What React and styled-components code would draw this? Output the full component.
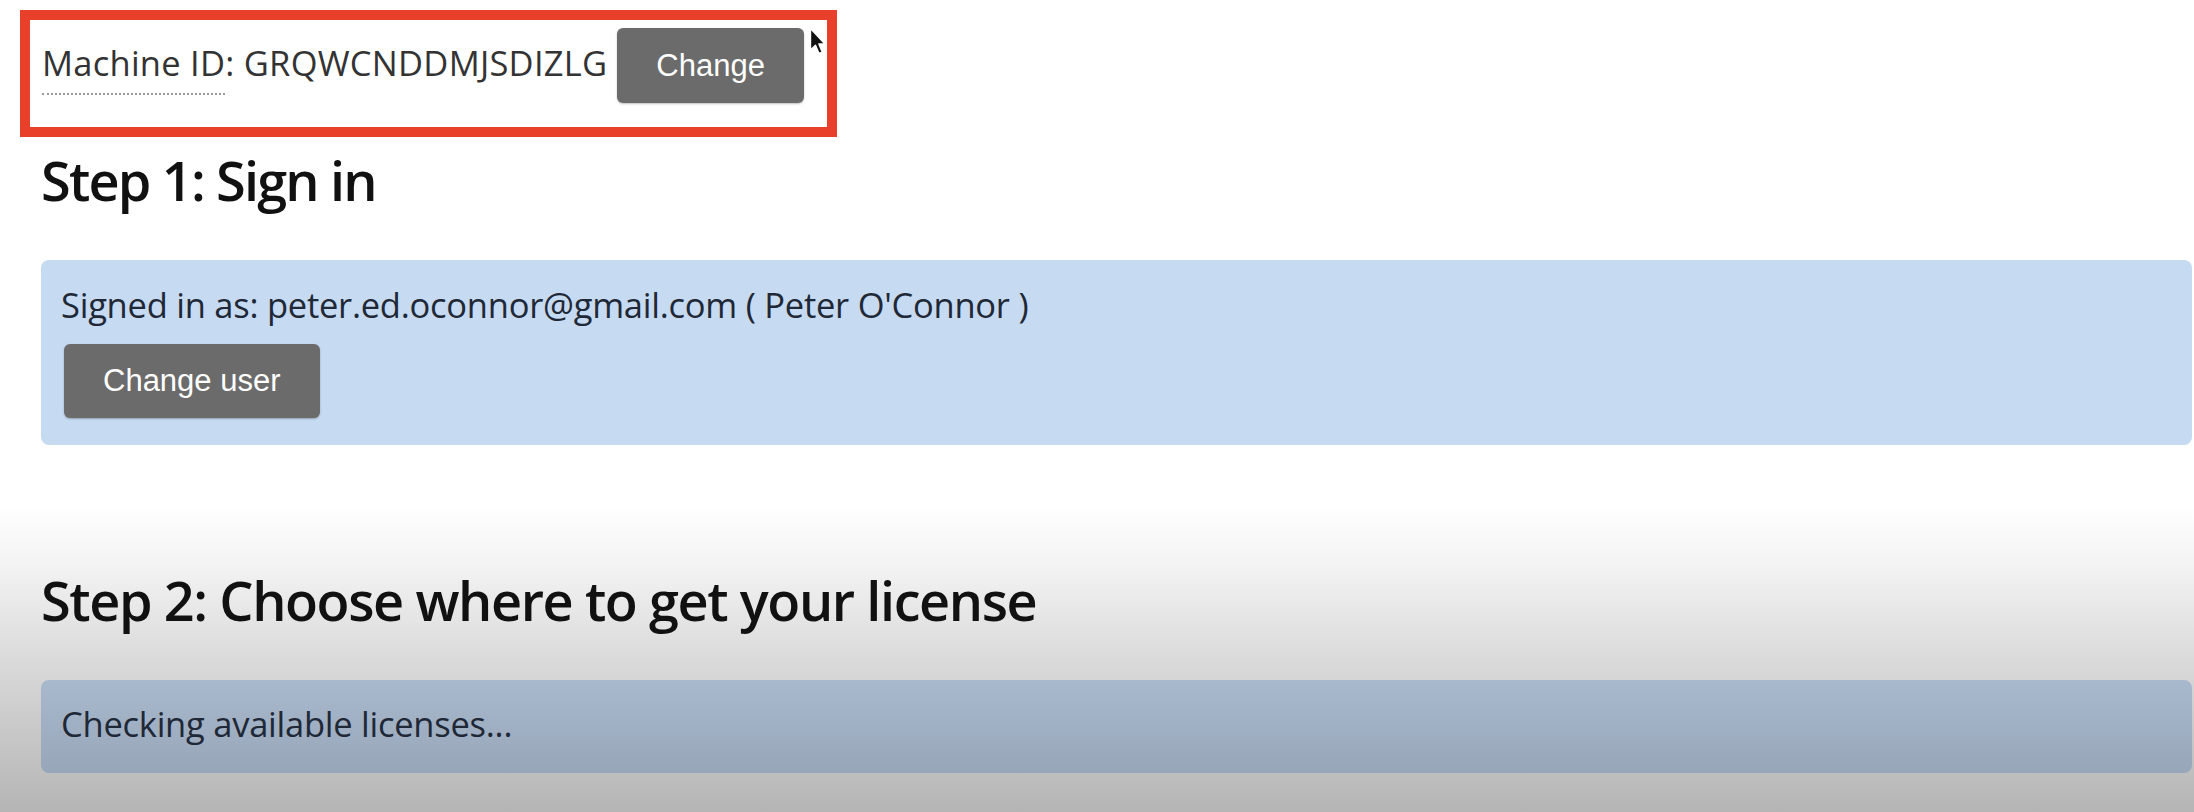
import React from "react";
import styled, { createGlobalStyle } from "styled-components";

const GlobalStyle = createGlobalStyle`
  html, body {
    margin: 0;
    padding: 0;
  }
  body {
    min-height: 812px;
    font-family: "Open Sans", "Noto Sans", sans-serif;
    background: linear-gradient(
      to bottom,
      #ffffff 0px,
      #ffffff 505px,
      #f3f3f3 565px,
      #dedede 645px,
      #cbcbcb 720px,
      #b5b5b5 812px
    );
    background-repeat: no-repeat;
    background-size: 100% 812px;
  }
`;

const Page = styled.div`
  padding: 10px 2px 0 20px;
`;

const Highlight = styled.div`
  position: relative;
  box-sizing: border-box;
  width: 817px;
  height: 127px;
  border: 10px solid #e8402a;
  background: #fff;
  padding: 8px 0 0 12px;
  display: flex;
  align-items: baseline;
  gap: 10px;
`;

const MachineText = styled.div`
  font-size: 34.5px;
  line-height: 1.5;
  letter-spacing: 0.25px;
  color: #333;
  white-space: nowrap;
`;

const Abbr = styled.span`
  display: inline-block;
  padding-bottom: 5px;
  border-bottom: 2px dotted #9a9a9a;
`;

const Button = styled.button`
  height: ${(props) => props.height || "75px"};
  padding: 0 39px;
  margin-left: ${(props) => props.offset || "0"};
  margin-top: ${(props) => props.top || "0"};
  border: none;
  border-radius: 6px;
  background: #6b6b6b;
  color: #fff;
  font-family: "Liberation Sans", Arial, sans-serif;
  font-size: 31px;
  box-shadow: 0 1px 2px rgba(0, 0, 0, 0.25);
  white-space: nowrap;
`;

const Pointer = styled.svg`
  position: absolute;
  left: 779px;
  top: 7px;
`;

const Heading = styled.h2`
  margin: ${(props) => props.margin};
  padding-left: 21px;
  font-size: 54px;
  font-weight: 600;
  line-height: 65px;
  letter-spacing: ${(props) => props.spacing || "-1.4px"};
  color: #111;
`;

const Panel = styled.div`
  margin-left: 21px;
  border-radius: 8px;
  background: ${(props) => props.bg || "#c6daf1"};
  padding: ${(props) => props.padding};
  color: #1e2836;
  font-size: 34.5px;
  line-height: 1.5;
  letter-spacing: -0.25px;
`;

function CursorIcon() {
  return (
    <Pointer width="17" height="29" viewBox="0 0 17 29">
      <path
        d="M1.5 1.5 L1.5 23 L6.5 18.2 L10 26.5 L13.3 25.2 L9.9 17 L16 17 Z"
        fill="#111"
        stroke="#fff"
        strokeWidth="1.4"
        strokeLinejoin="round"
      />
    </Pointer>
  );
}

export default function App() {
  return (
    <>
      <GlobalStyle />
      <Page>
        <Highlight>
          <MachineText>
            <Abbr>Machine ID</Abbr>: GRQWCNDDMJSDIZLG
          </MachineText>
          <Button>Change</Button>
          <CursorIcon />
        </Highlight>

        <Heading margin="11px 0 47px 0" spacing="-1.8px">
          Step 1: Sign in
        </Heading>
        <Panel padding="19px 20px 27px 20px">
          <div>Signed in as: peter.ed.oconnor@gmail.com ( Peter O'Connor )</div>
          <Button height="74px" offset="3px" top="13px">
            Change user
          </Button>
        </Panel>

        <Heading margin="123px 0 47px 0">Step 2: Choose where to get your license</Heading>
        <Panel
          padding="18px 20px 23px 20px"
          bg="linear-gradient(to bottom, #a9b9cd 0%, #97a6b9 100%)"
        >
          Checking available licenses...
        </Panel>
      </Page>
    </>
  );
}
